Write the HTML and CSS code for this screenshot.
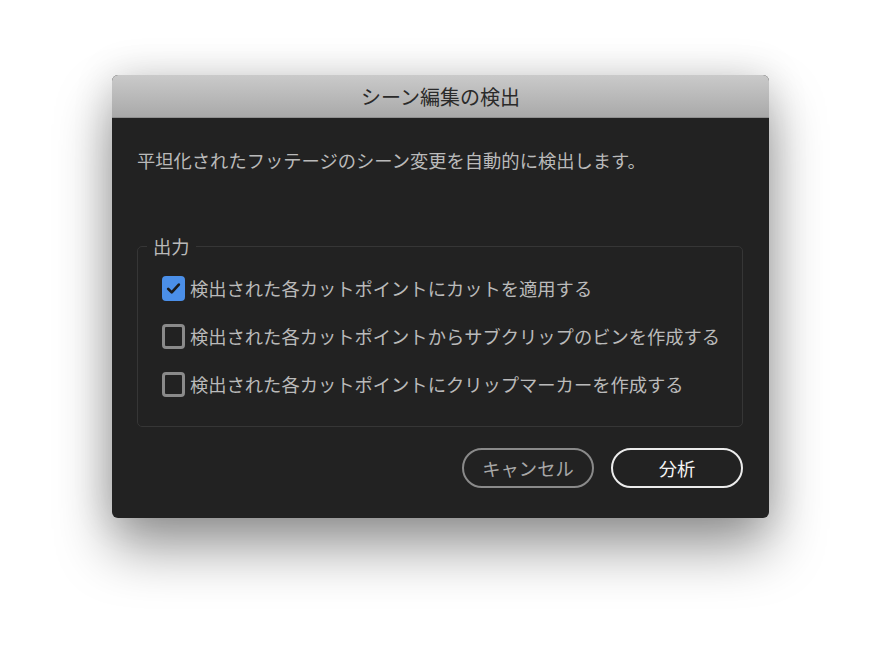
FILE: index.html
```html
<!DOCTYPE html>
<html lang="ja">
<head>
<meta charset="utf-8">
<link rel="stylesheet" href="styles.css">
</head>
<body>
<div class="dialog">
  <div class="titlebar">シーン編集の検出</div>
  <div class="content">
    <p class="desc">平坦化されたフッテージのシーン変更を自動的に検出します。</p>
    <fieldset class="group">
      <legend class="legend">出力</legend>
      <label class="row">
        <span class="box checked">
          <svg viewBox="0 0 24 24" width="21" height="21"><path d="M4.5 12.5l5 5L19.5 6.5" fill="none" stroke="#1a1a1a" stroke-width="3.8" stroke-linecap="round" stroke-linejoin="round"/></svg>
        </span>
        <span class="label">検出された各カットポイントにカットを適用する</span>
      </label>
      <label class="row">
        <span class="box"></span>
        <span class="label">検出された各カットポイントからサブクリップのビンを作成する</span>
      </label>
      <label class="row">
        <span class="box"></span>
        <span class="label">検出された各カットポイントにクリップマーカーを作成する</span>
      </label>
    </fieldset>
    <div class="buttons">
      <button class="btn cancel">キャンセル</button>
      <button class="btn primary">分析</button>
    </div>
  </div>
</div>
</body>
</html>
```

FILE: styles.css
```css
html, body {
  margin: 0;
  padding: 0;
  background: #ffffff;
}
body {
  height: 666px;
  overflow: hidden;
  padding-top: 75px;
  box-sizing: border-box;
  font-family: "Noto Sans CJK JP", "Noto Sans", sans-serif;
}
.dialog {
  margin-left: 112px;
  width: 657px;
  border-radius: 6px;
  overflow: hidden;
  background: #222222;
  box-shadow: 0 30px 55px rgba(0, 0, 0, 0.4), 0 0 40px rgba(0, 0, 0, 0.14);
}
.titlebar {
  height: 42px;
  border-bottom: 1px solid #8f8f8f;
  background: linear-gradient(#cacaca, #a9a9a9);
  color: #2a2a2a;
  font-size: 20px;
  line-height: 44px;
  text-align: center;
}
.content {
  padding: 30px 26px 30px 25px;
}
.desc {
  margin: 0;
  font-size: 18.3px;
  line-height: 24px;
  color: #bababa;
}
.group {
  margin: 64px 0 0 0;
  padding: 8px 0 18px 0;
  border: 1px solid #363636;
  border-radius: 5px;
  min-inline-size: 0;
}
.legend {
  margin-left: 9px;
  padding: 0 6px;
  font-size: 18.3px;
  line-height: 20px;
  color: #bababa;
}
.row {
  display: flex;
  align-items: center;
  gap: 5px;
  height: 48px;
  padding-left: 24px;
}
.box {
  box-sizing: border-box;
  width: 23px;
  height: 25px;
  border: 3px solid #8a8a8a;
  border-radius: 4px;
  display: flex;
  align-items: center;
  justify-content: center;
  flex: none;
}
.box.checked {
  background: #4b8fe8;
  border-color: #4b8fe8;
}
.label {
  font-size: 18.3px;
  line-height: 24px;
  color: #bababa;
  white-space: nowrap;
}
.buttons {
  display: flex;
  justify-content: flex-end;
  gap: 17px;
  margin-top: 21px;
}
.btn {
  box-sizing: border-box;
  width: 132px;
  height: 40px;
  border-radius: 20px;
  background: transparent;
  font-family: inherit;
  font-size: 18.3px;
  padding: 0;
}
.btn.cancel {
  border: 2px solid #8a8a8a;
  color: #a8a8a8;
}
.btn.primary {
  border: 2px solid #ececec;
  color: #f4f4f4;
  font-weight: 400;
}
```
